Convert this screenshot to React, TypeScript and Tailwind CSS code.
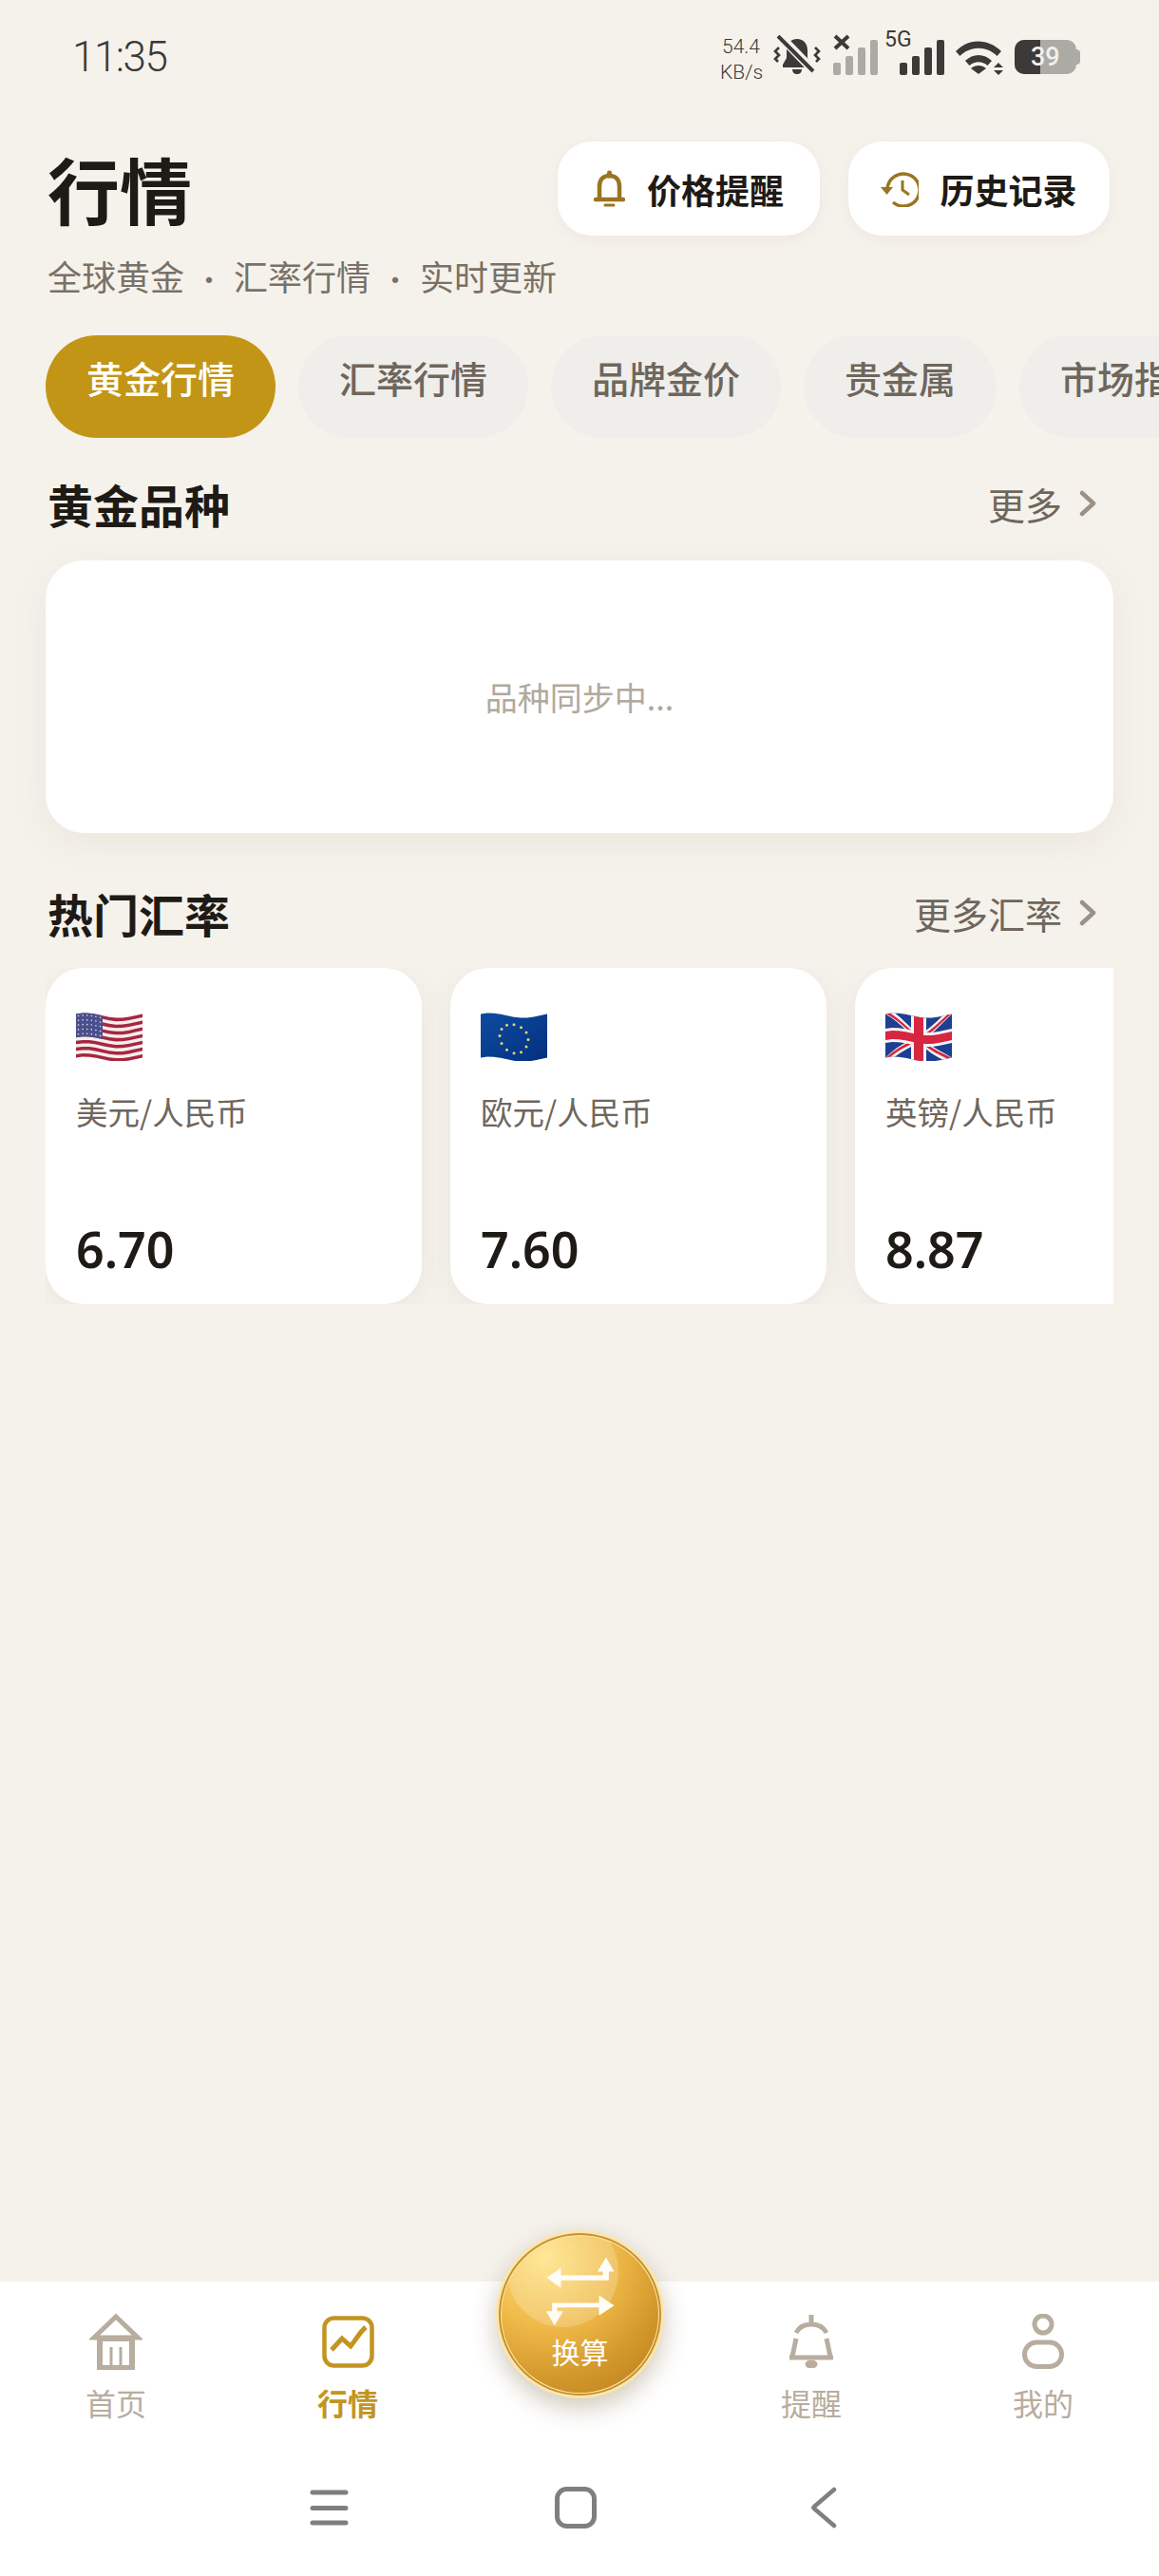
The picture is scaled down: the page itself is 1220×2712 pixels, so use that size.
const cjk = "font-['Noto_Sans_CJK_SC','Noto_Sans',sans-serif]";

// Gentle cloth wave shared by all three flags
const wave = (x: number) => -2.6 * Math.sin((x / 70) * 2 * Math.PI + 0.7) + 0.6;

function warp(pts: [number, number][]) {
  const out: string[] = [];
  pts.forEach(([x, y], i) => {
    const [nx, ny] = pts[(i + 1) % pts.length];
    for (let s = 0; s < 10; s++) {
      const px = x + ((nx - x) * s) / 10;
      const py = y + ((ny - y) * s) / 10;
      out.push(`${px.toFixed(2)},${(py + wave(px)).toFixed(2)}`);
    }
  });
  return out.join(" ");
}

const rect = (x0: number, y0: number, x1: number, y1: number): [number, number][] => [
  [x0, y0],
  [x1, y0],
  [x1, y1],
  [x0, y1],
];

function FlagUS() {
  const top = 2.5;
  const h = 46 / 13;
  return (
    <svg width="70" height="51" viewBox="0 0 70 51">
      <polygon points={warp(rect(0, top, 70, 48.5))} fill="#f4eeee" />
      {Array.from({ length: 7 }).map((_, i) => (
        <polygon key={i} points={warp(rect(0, top + i * 2 * h, 70, top + i * 2 * h + h))} fill="#a8263f" />
      ))}
      <polygon points={warp(rect(0, top, 28, top + 7 * h))} fill="#4a4f8c" />
      {Array.from({ length: 5 }).map((_, r) =>
        Array.from({ length: 6 }).map((_, c) => (
          <circle key={`${r}-${c}`} cx={2.5 + c * 4.6} cy={top + 2.5 + r * 4.8 + wave(2.5 + c * 4.6)} r="0.8" fill="#e6e4ee" />
        ))
      )}
    </svg>
  );
}

function FlagEU() {
  const stars = Array.from({ length: 12 }).map((_, i) => {
    const a = (i / 12) * 2 * Math.PI;
    const x = 35 + 15 * Math.sin(a);
    return { x, y: 25.5 - 15 * Math.cos(a) + wave(x) };
  });
  return (
    <svg width="70" height="51" viewBox="0 0 70 51">
      <defs>
        <linearGradient id="eu-blue" x1="0" y1="0" x2="1" y2="1">
          <stop offset="0" stopColor="#0d4ba0" />
          <stop offset="1" stopColor="#04307f" />
        </linearGradient>
      </defs>
      <polygon points={warp(rect(0, 2.5, 70, 48.5))} fill="url(#eu-blue)" />
      {stars.map((s, i) => (
        <circle key={i} cx={s.x} cy={s.y} r="1.5" fill="#e5d277" />
      ))}
    </svg>
  );
}

function FlagUK() {
  const diag = (a: number, b: number, c: number, d: number, w: number): [number, number][] => [
    [a - w, b],
    [a + w, b],
    [c + w, d],
    [c - w, d],
  ];
  return (
    <svg width="70" height="51" viewBox="0 0 70 51">
      <polygon points={warp(rect(0, 2.5, 70, 48.5))} fill="#1d3f92" />
      <polygon points={warp(diag(5, 2.5, 65, 48.5, 5))} fill="#f5f3f5" />
      <polygon points={warp(diag(65, 2.5, 5, 48.5, 5))} fill="#f5f3f5" />
      <polygon points={warp(diag(3, 2.5, 67, 48.5, 2.2))} fill="#d7263f" />
      <polygon points={warp(diag(67, 2.5, 3, 48.5, 2.2))} fill="#d7263f" />
      <polygon points={warp(rect(27, 2.5, 43, 48.5))} fill="#f5f3f5" />
      <polygon points={warp(rect(0, 18, 70, 33))} fill="#f5f3f5" />
      <polygon points={warp(rect(30, 2.5, 40, 48.5))} fill="#d7263f" />
      <polygon points={warp(rect(0, 21, 70, 30))} fill="#d7263f" />
    </svg>
  );
}

function Signal({ color }: { color: string }) {
  return (
    <svg width="47" height="37" viewBox="0 0 47 37" fill={color}>
      <rect x="0" y="24" width="8" height="13" rx="2" />
      <rect x="13" y="17" width="8" height="20" rx="2" />
      <rect x="26" y="8" width="8" height="29" rx="2" />
      <rect x="39" y="0" width="8" height="37" rx="2" />
    </svg>
  );
}

function StatusBar() {
  return (
    <div className="relative h-[149px] shrink-0">
      <div className="pl-[76px] pt-[35px] font-['Roboto',sans-serif] font-light text-[44px] leading-[50px] tracking-[-1.5px] text-[#3a3936]">
        11:35
      </div>
      <div className="absolute left-[758px] top-[36px] flex items-start text-[#3b3a38]">
        <div className="w-[44px] font-['Roboto',sans-serif] font-light text-[21px] leading-[27px] text-center">
          <div>54.4</div>
          <div>KB/s</div>
        </div>
        <svg className="ml-[12px] mt-[1px]" width="50" height="42" viewBox="0 0 50 42" fill="#3b3a38">
          <path d="M25 4c-7 0-11 5-11 12v8l-4 7v3h30v-3l-4-7v-8c0-7-4-12-11-12z" />
          <path d="M20 36h10c0 3-2 5-5 5s-5-2-5-5z" />
          <path d="M6 0L42 37" stroke="#f5f2ec" strokeWidth="9" />
          <path d="M5 1L42 38" stroke="#3b3a38" strokeWidth="4" />
          <path d="M6 13l-4 4 4 4-4 4 3 3M44 13l4 4-4 4 4 4-3 3" fill="none" stroke="#3b3a38" strokeWidth="2.6" />
        </svg>
        <div className="relative ml-[13px] mt-[6px]">
          <Signal color="#abaaa5" />
          <svg className="absolute left-0 top-[-6px]" width="18" height="17" viewBox="0 0 18 17">
            <path d="M2 2l14 13M16 2L2 15" stroke="#3b3a38" strokeWidth="4" />
          </svg>
        </div>
        <div className="relative ml-[23px] mt-[6px]">
          <Signal color="#3b3a38" />
          <span className="absolute left-[-16px] top-[-12px] font-['Roboto',sans-serif] text-[23px] leading-[24px]">5G</span>
        </div>
        <svg className="ml-[12px] mt-[7px]" width="51" height="36" viewBox="0 0 51 36" fill="#3b3a38">
          <path d="M0 11C13-3 34-3 48 11l-4.500 5C33 5 15 5 4.500 16z" />
          <path d="M10 21c8-8 20-8 28 0l-4.500 5c-6-5-13-5-19 0z" />
          <path d="M24 35l-8-6c4.500-4 11.500-4 16 0z" />
          <path d="M45 23l5 5H40zM45 36l5-5H40z" />
        </svg>
        <div className="relative ml-[11px] mt-[6px] h-[36px] w-[69px]">
          <div className="absolute right-0 top-[10px] h-[16px] w-[5px] rounded-r-[4px] bg-[#abaaa5]" />
          <div className="flex h-[36px] w-[65px] overflow-hidden rounded-[10px] bg-[#abaaa5]">
            <div className="h-full w-[27px] bg-[#3b3a38]" />
          </div>
          <span className="absolute left-[17px] top-[0px] font-['Roboto',sans-serif] text-[27px] leading-[36px] font-medium text-[#f2f0ec]">39</span>
        </div>
      </div>
    </div>
  );
}

function Header() {
  return (
    <div className="shrink-0 px-[48px]">
      <div className="flex justify-between">
        <div className="h-[99px] pl-[2px] text-[76px] leading-[98px] font-bold text-[#1e1a16]">行情</div>
        <div className="flex gap-[30px] pr-[4px]">
          <button className="flex h-[99px] w-[276px] items-center justify-center gap-[23px] rounded-[36px] bg-white text-[36px] font-semibold text-[#1e1a16] shadow-[0_4px_16px_rgba(140,120,80,0.07)]">
            <svg width="33" height="40" viewBox="0 0 33 40" fill="none" stroke="#9a7420" strokeWidth="4.500">
              <path d="M16.500 3v3" strokeLinecap="round" strokeWidth="5" />
              <path d="M6 29V17c0-7 4-11 10.500-11S27 10 27 17v12" />
              <path d="M2 31h29" strokeLinecap="round" />
              <path d="M12 37h9" strokeLinecap="round" strokeWidth="3" />
            </svg>
            价格提醒
          </button>
          <button className="flex h-[99px] w-[275px] items-center justify-center gap-[22px] rounded-[36px] bg-white text-[36px] font-semibold text-[#1e1a16] shadow-[0_4px_16px_rgba(140,120,80,0.07)]">
            <svg width="40" height="38" viewBox="0 0 40 38" fill="none" stroke="#9a7420" strokeWidth="3.500">
              <path d="M7 19A17 17 0 1 1 13 33" />
              <path d="M0 17h13l-6.500 8z" fill="#9a7420" stroke="none" />
              <path d="M23 10v10l7 5" strokeWidth="3" />
            </svg>
            历史记录
          </button>
        </div>
      </div>
      <div className="mt-[20px] h-[44px] whitespace-pre pl-[2px] text-[36px] leading-[44px] text-[#7a7166]">
        全球黄金<span className="mx-[11px] text-[30px]">·</span>汇率行情<span className="mx-[11px] text-[30px]">·</span>实时更新
      </div>
    </div>
  );
}

function Tabs() {
  const tabs = ["黄金行情", "汇率行情", "品牌金价", "贵金属", "市场指数"];
  return (
    <div className="flex h-[108px] shrink-0 gap-[24px] overflow-hidden pl-[48px]">
      {tabs.map((t, i) => (
        <div
          key={t}
          className={`h-[108px] shrink-0 rounded-[54px] px-[43px] pt-[20px] text-[39px] leading-[48px] font-medium ${
            i === 0 ? "bg-[#c29516] text-white" : "bg-[#efeeeb] text-[#6f665c]"
          }`}
        >
          {t}
        </div>
      ))}
    </div>
  );
}

function SectionHead({ title, more }: { title: string; more: string }) {
  return (
    <div className="flex h-[60px] items-center justify-between pl-[50px] pr-[66px]">
      <div className="text-[48px] leading-[60px] font-semibold text-[#1e1a16]">{title}</div>
      <div className="flex items-center gap-[18px] text-[39px] leading-[50px] text-[#6f665c]">
        {more}
        <svg width="18" height="28" viewBox="0 0 18 28" fill="none" stroke="#9a9284" strokeWidth="4.500" strokeLinecap="round" strokeLinejoin="round">
          <path d="M3 3l12 11L3 25" />
        </svg>
      </div>
    </div>
  );
}

function RateCard({ flag, name, value }: { flag: React.ReactNode; name: string; value: string }) {
  return (
    <div className="flex h-[354px] w-[396px] shrink-0 flex-col rounded-[40px] bg-white pl-[32px] pt-[47px] shadow-[0_6px_30px_rgba(120,100,60,0.08)]">
      {flag}
      <div className="mt-[31px] text-[33.500px] leading-[44px] text-[#6f665c]">{name}</div>
      <div className="mt-[91px] font-['Noto_Sans',sans-serif] text-[52px] leading-[64px] font-semibold text-[#1e1a16]">{value}</div>
    </div>
  );
}

function NavItem({ icon, label, active }: { icon: React.ReactNode; label: string; active?: boolean }) {
  return (
    <div className="flex flex-col items-center pt-[30px]">
      <div className="flex h-[66px] items-center justify-center">{icon}</div>
      <div className={`mt-[9px] text-[32px] leading-[44px] ${active ? "font-bold text-[#c29520]" : "text-[#b8ad9e]"}`}>{label}</div>
    </div>
  );
}

function BottomNav() {
  return (
    <div className="relative h-[310px] shrink-0 bg-white">
      <div className="grid grid-cols-5">
        <NavItem
          label="首页"
          icon={
            <svg width="56" height="60" viewBox="0 0 56 60" fill="none" stroke="#b8ad9e" strokeWidth="5">
              <path d="M5 26L28 4l23 22z" />
              <path d="M10 27h36M11 27v31h34V27" strokeWidth="6" />
              <path d="M23 36v21M33 36v21" strokeWidth="3" />
            </svg>
          }
        />
        <NavItem
          active
          label="行情"
          icon={
            <svg width="55" height="55" viewBox="0 0 55 55" fill="none" stroke="#c29520" strokeWidth="4.500">
              <rect x="2.500" y="2.500" width="50" height="50" rx="10" />
              <path d="M10 36l11-12 9 8c6-7 9-14 16-20" strokeWidth="5" />
            </svg>
          }
        />
        <div />
        <NavItem
          label="提醒"
          icon={
            <svg width="46" height="56" viewBox="0 0 46 56" fill="none" stroke="#b8ad9e" strokeWidth="5">
              <path d="M23 0v10" />
              <path d="M7 19C10 13 16 10 23 10s13 3 16 9" />
              <path d="M7 25L3 44M39 25l4 19" />
              <path d="M0 45h46" />
              <ellipse cx="23" cy="52" rx="6.500" ry="4.500" fill="#b8ad9e" stroke="none" />
            </svg>
          }
        />
        <NavItem
          label="我的"
          icon={
            <svg width="44" height="58" viewBox="0 0 44 58" fill="none" stroke="#b8ad9e" strokeWidth="5">
              <circle cx="22" cy="11" r="9" />
              <rect x="2.500" y="30" width="39" height="25.500" rx="12.700" />
            </svg>
          }
        />
      </div>
      <div className="absolute bottom-[50px] left-[326px] flex items-center">
        <svg width="41" height="38" viewBox="0 0 41 38" stroke="#7f7f7f" strokeWidth="5" strokeLinecap="round">
          <path d="M3 3h35M3 19.500h35M3 35h35" />
        </svg>
        <svg className="ml-[217px]" width="44" height="44" viewBox="0 0 44 44" fill="none" stroke="#7f7f7f" strokeWidth="5">
          <rect x="2.500" y="2.500" width="39" height="39" rx="10" />
        </svg>
        <svg className="ml-[225px]" width="28" height="44" viewBox="0 0 28 44" fill="none" stroke="#7f7f7f" strokeWidth="4.500" strokeLinecap="round" strokeLinejoin="round">
          <path d="M25 3L4 21c-1 .7-1 1.300 0 2l21 18" />
        </svg>
      </div>
    </div>
  );
}

function ConvertButton() {
  return (
    <div className="absolute left-[522px] top-[2348px] h-[177px] w-[177px] rounded-full bg-[#fbe6ab] p-[3px] shadow-[0_10px_26px_rgba(90,60,10,0.28)]">
      <div className="h-full w-full rounded-full bg-[#c88f2c] p-[2px]">
        <div className="h-full w-full rounded-full bg-[#fbe6ab] p-[1px]">
          <div className="relative h-full w-full overflow-hidden rounded-full bg-[radial-gradient(circle_at_28%_14%,#ffe27d_0%,#f0bb4a_38%,#d3982b_68%,#b67d1b_100%)]">
            <div className="absolute left-[6px] top-[-21px] h-[117px] w-[117px] rounded-full bg-white/20" />
          </div>
        </div>
      </div>
      <svg className="absolute inset-0" width="177" height="177" viewBox="125 85 530 530" fill="#fffdf6">
        <path d="M285 235l45-32v24h132v-12h-17l27-45 26 45h-17v28H330v24z" />
        <path d="M498 322l-48-32v24H302v26h-19l27 45 27-45h-19v-12h132v26z" />
      </svg>
      <div className="absolute inset-x-0 top-[109px] text-center text-[30px] leading-[36px] text-white">换算</div>
    </div>
  );
}

export default function App() {
  return (
    <div className={`relative flex h-[2712px] w-[1220px] flex-col overflow-hidden bg-[#f5f2ec] ${cjk}`}>
      <StatusBar />
      <Header />
      <div className="flex-1">
        <div className="h-[41px]" />
        <Tabs />
        <div className="mt-[39px]">
          <SectionHead title="黄金品种" more="更多" />
        </div>
        <div className="mx-[48px] mt-[30px] flex h-[287px] items-center justify-center rounded-[40px] bg-white text-[34px] leading-[44px] text-[#b0a99d] shadow-[0_10px_40px_rgba(120,100,60,0.08)]">
          品种同步中...
        </div>
        <div className="mt-[54px]">
          <SectionHead title="热门汇率" more="更多汇率" />
        </div>
        <div className="ml-[48px] mr-[48px] mt-[28px] flex gap-[30px] overflow-hidden">
          <RateCard flag={<FlagUS />} name="美元/人民币" value="6.70" />
          <RateCard flag={<FlagEU />} name="欧元/人民币" value="7.60" />
          <RateCard flag={<FlagUK />} name="英镑/人民币" value="8.87" />
        </div>
      </div>
      <BottomNav />
      <ConvertButton />
    </div>
  );
}
